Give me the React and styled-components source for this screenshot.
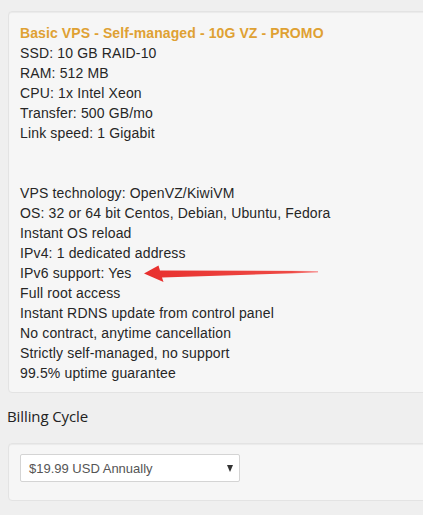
import React from "react";
import styled, { createGlobalStyle } from "styled-components";

const Global = createGlobalStyle`
  html, body { margin: 0; padding: 0; background: #efefef; overflow: hidden; }
  body { font-family: "Liberation Sans", Arial, sans-serif; }
`;

const Page = styled.div`
  position: relative;
  width: 423px;
  height: 515px;
  overflow: hidden;
  padding: 11px 0 0 8px;
  box-sizing: border-box;
`;

const Well = styled.div`
  width: 440px;
  box-sizing: border-box;
  background: #f6f6f6;
  border: 1px solid #e3e3e3;
  border-radius: 4px;
  box-shadow: inset 0 1px 1px rgba(0, 0, 0, 0.05);
  padding: ${(p) => p.$pad};
`;

const Line = styled.div`
  font-size: 14px;
  line-height: 20px;
  height: 20px;
  letter-spacing: 0.15px;
  color: #262626;
  white-space: nowrap;
`;

const Title = styled(Line)`
  font-weight: bold;
  letter-spacing: 0.1px;
  color: #dfa133;
`;

const Heading = styled.h3`
  margin: 0;
  padding: 13px 0 0 0;
  margin-left: -1px;
  height: 50px;
  box-sizing: border-box;
  font-family: "Open Sans", "Liberation Sans", sans-serif;
  font-weight: normal;
  font-size: 15px;
  line-height: 20px;
  letter-spacing: -0.1px;
  color: #222;
`;

const SelectBox = styled.div`
  width: 220px;
  height: 28px;
  box-sizing: border-box;
  background: #fff;
  border: 1px solid #d4d4d4;
  border-radius: 2px;
  display: flex;
  align-items: center;
  justify-content: space-between;
  padding: 0 6px 0 8px;
  font-size: 13px;
  color: #555;
`;

const Caret = styled.span`
  width: 0;
  height: 0;
  border-left: 3.5px solid transparent;
  border-right: 3.5px solid transparent;
  border-top: 7px solid #333;
  margin-top: 1px;
`;

const Overlay = styled.svg`
  position: absolute;
  left: 0;
  top: 0;
  pointer-events: none;
`;

const lines1 = [
  "SSD: 10 GB RAID-10",
  "RAM: 512 MB",
  "CPU: 1x Intel Xeon",
  "Transfer: 500 GB/mo",
  "Link speed: 1 Gigabit",
  "",
  "",
  "VPS technology: OpenVZ/KiwiVM",
  "OS: 32 or 64 bit Centos, Debian, Ubuntu, Fedora",
  "Instant OS reload",
  "IPv4: 1 dedicated address",
  "IPv6 support: Yes",
  "Full root access",
  "Instant RDNS update from control panel",
  "No contract, anytime cancellation",
  "Strictly self-managed, no support",
  "99.5% uptime guarantee",
];

export default function App() {
  return (
    <>
      <Global />
      <Page>
        <Well $pad="11px 11px 9px 11px">
          <Title>Basic VPS - Self-managed - 10G VZ - PROMO</Title>
          {lines1.map((l, i) => (
            <Line key={i}>{l}</Line>
          ))}
        </Well>
        <Heading>Billing Cycle</Heading>
        <Well $pad="10px 11px 18px 11px">
          <SelectBox>
            <span>$19.99 USD Annually</span>
            <Caret />
          </SelectBox>
        </Well>
        <Overlay width="423" height="515" viewBox="0 0 423 515">
          <defs>
            <linearGradient id="ar" x1="0" x2="1" y1="0" y2="0">
              <stop offset="0" stopColor="#e8302e" />
              <stop offset="0.85" stopColor="#ee4a45" />
              <stop offset="1" stopColor="#f7a0a0" />
            </linearGradient>
          </defs>
          <path
            d="M144,273.5 L158.5,265.5 L160,270.5 L318,271 L318,272.5 L162,277.5 L163.5,282 Z"
            fill="url(#ar)"
          />
        </Overlay>
      </Page>
    </>
  );
}
